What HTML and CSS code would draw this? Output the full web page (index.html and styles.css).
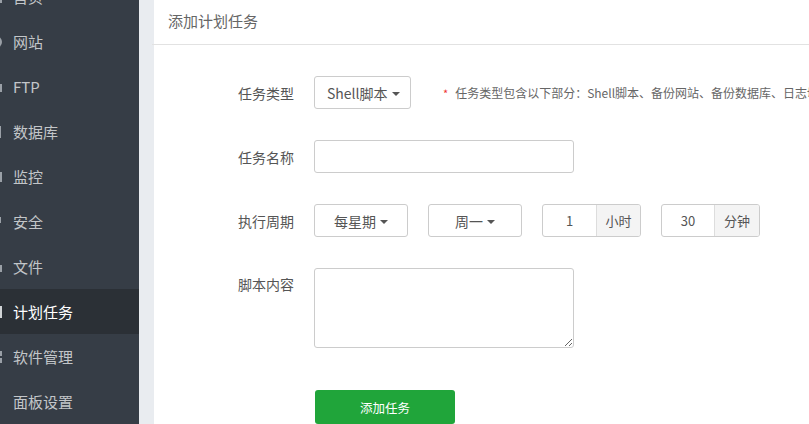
FILE: index.html
```html
<!DOCTYPE html>
<html lang="zh-CN">
<head>
<meta charset="utf-8">
<title>添加计划任务</title>
<link rel="stylesheet" href="styles.css">
</head>
<body>
<div class="layout">
  <aside class="sidebar">
    <ul class="menu">
      <li class="item"><span class="ico"><svg viewBox="0 0 14 14"><path d="M1 7 7 1l6 6v6H1z" fill="#9aa0a7"/></svg></span>首页</li>
      <li class="item"><span class="ico"><svg viewBox="0 0 14 14"><circle cx="7" cy="7" r="6" fill="#9aa0a7"/></svg></span>网站</li>
      <li class="item"><span class="ico"><svg viewBox="0 0 14 14"><rect x="1" y="4" width="12" height="8" fill="#9aa0a7"/></svg></span>FTP</li>
      <li class="item"><span class="ico"><svg viewBox="0 0 14 14"><rect x="2" y="1" width="10" height="12" fill="#9aa0a7"/></svg></span>数据库</li>
      <li class="item"><span class="ico"><svg viewBox="0 0 14 14"><rect x="1" y="2" width="12" height="10" fill="#9aa0a7"/></svg></span>监控</li>
      <li class="item"><span class="ico"><svg viewBox="0 0 14 14"><rect x="2" y="2" width="10" height="6" fill="#9aa0a7"/></svg></span>安全</li>
      <li class="item"><span class="ico"><svg viewBox="0 0 14 14"><path d="M1 3h5l1 2h6v7H1z" fill="#9aa0a7"/></svg></span>文件</li>
      <li class="item active"><span class="ico"><svg viewBox="0 0 14 14"><rect x="1" y="1" width="12" height="12" fill="#d0d3d6"/></svg></span>计划任务</li>
      <li class="item"><span class="ico"><svg viewBox="0 0 14 14"><rect x="1" y="1" width="5" height="5" fill="#9aa0a7"/><rect x="8" y="1" width="5" height="5" fill="#9aa0a7"/><rect x="1" y="8" width="5" height="5" fill="#9aa0a7"/><rect x="8" y="8" width="5" height="5" fill="#9aa0a7"/></svg></span>软件管理</li>
      <li class="item"><span class="ico"><svg viewBox="0 0 14 14"><circle cx="7" cy="7" r="4" fill="#9aa0a7"/></svg></span>面板设置</li>
    </ul>
  </aside>
  <main class="main">
    <section class="panel">
      <header class="panel-head">添加计划任务</header>
      <form class="form">
        <div class="row">
          <label class="label">任务类型</label>
          <div class="select w97 left">Shell脚本 <span class="caret"></span></div>
          <p class="note"><span class="star">*</span>任务类型包含以下部分：Shell脚本、备份网站、备份数据库、日志切割、释放内存、访问URL</p>
        </div>
        <div class="row">
          <label class="label">任务名称</label>
          <input class="input w260" type="text">
        </div>
        <div class="row">
          <label class="label">执行周期</label>
          <div class="cycle">
            <div class="select w94">每星期 <span class="caret"></span></div>
            <div class="select w94">周一 <span class="caret"></span></div>
            <div class="group">
              <span class="num">1</span><span class="addon">小时</span>
            </div>
            <div class="group">
              <span class="num">30</span><span class="addon">分钟</span>
            </div>
          </div>
        </div>
        <div class="row top">
          <label class="label">脚本内容</label>
          <textarea class="textarea"></textarea>
        </div>
        <div class="row submit">
          <span class="label"></span>
          <button type="button" class="btn">添加任务</button>
        </div>
      </form>
    </section>
  </main>
</div>
</body>
</html>
```
FILE: styles.css
```css
* { box-sizing: border-box; }
html, body { margin: 0; padding: 0; height: 100%; overflow: hidden; }
body {
  font-family: "Noto Sans CJK SC", "Noto Sans", sans-serif;
  color: #555;
  background: #e9ecf0;
}
.layout { display: flex; height: 424px; }
.sidebar {
  width: 139px;
  flex: none;
  background: #363d46;
  overflow: hidden;
}
.menu { list-style: none; margin: -26px 0 0; padding: 0; }
.item {
  height: 45px;
  display: flex;
  align-items: center;
  gap: 10px;
  font-size: 15px;
  color: #c3c6c9;
  white-space: nowrap;
}
.item.active { background: #2b3036; color: #fff; }
.ico { width: 14px; height: 14px; margin-left: -11px; display: flex; }
.ico svg { width: 14px; height: 14px; }
.main { flex: 1; padding-left: 15px; min-width: 0; }
.panel { background: #fff; height: 100%; }
.panel-head {
  height: 45px;
  line-height: 42px;
  padding-left: 16px;
  font-size: 15px;
  color: #666;
  border-bottom: 1px solid #e2e2e2;
  margin-left: -2px;
}
.form { padding: 31px 0 0 40px; }
.row { display: flex; align-items: center; gap: 20px; margin-bottom: 31px; white-space: nowrap; }
.row.top { align-items: flex-start; margin-bottom: 42px; }
.label {
  width: 100px;
  flex: none;
  text-align: right;
  font-size: 14px;
  line-height: 32px;
  color: #555;
}
.select {
  height: 33px;
  border: 1px solid #ccc;
  border-radius: 3px;
  display: flex;
  align-items: center;
  justify-content: center;
  font-size: 14px;
  color: #555;
  flex: none;
}
.select.left { justify-content: flex-start; padding-left: 12px; }
.caret {
  width: 0; height: 0;
  border-left: 4px solid transparent;
  border-right: 4px solid transparent;
  border-top: 4px solid #555;
  margin-left: 4px;
  margin-top: 2px;
}
.w97 { width: 97px; }
.w94 { width: 94px; }
.w260 { width: 260px; }
.note { margin: 0 0 0 12px; font-size: 12px; color: #666; display: flex; align-items: center; }
.star { color: #e33; margin-right: 7px; font-size: 11px; }
.input {
  height: 33px;
  border: 1px solid #ccc;
  border-radius: 3px;
  padding: 0;
  margin: 0;
  flex: none;
}
.cycle { display: flex; gap: 20px; }
.group {
  display: flex;
  height: 33px;
  border: 1px solid #ccc;
  border-radius: 3px;
  overflow: hidden;
}
.num {
  width: 54px;
  display: flex;
  align-items: center;
  justify-content: center;
  font-size: 13px;
  color: #555;
  border-right: 1px solid #ddd;
}
.addon {
  width: 43px;
  background: #f4f4f4;
  display: flex;
  align-items: center;
  justify-content: center;
  font-size: 13px;
  color: #555;
}
.group + .group .num { width: 53px; }
.group + .group .addon { width: 44px; }
.textarea {
  width: 260px;
  height: 80px;
  border: 1px solid #ccc;
  border-radius: 3px;
  margin: 0;
  padding: 0;
  flex: none;
}
.btn {
  width: 140px;
  height: 34px;
  background: #20a53a;
  color: #fff;
  border: none;
  border-radius: 3px;
  font-family: inherit;
  font-size: 12.5px;
  margin-left: 1px;
}
```
